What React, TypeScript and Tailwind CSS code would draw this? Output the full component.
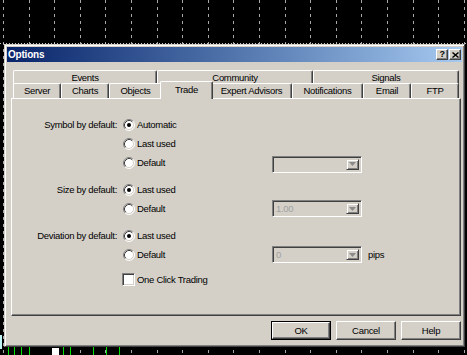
import React from "react";

const font = "font-['Liberation_Sans',Arial,sans-serif]";

const backTabs = [
  { label: "Events", w: "w-[144px]" },
  { label: "Community", w: "w-[156px]" },
  { label: "Signals", w: "w-[146px]" },
];

const frontTabs = [
  { label: "Server", w: "w-[48px]" },
  { label: "Charts", w: "w-[48px]" },
  { label: "Objects", w: "w-[53px]" },
  { label: "Trade", w: "w-[53px]", active: true },
  { label: "Expert Advisors", w: "w-[81px]" },
  { label: "Notifications", w: "w-[71px]" },
  { label: "Email", w: "w-[48px]" },
  { label: "FTP", w: "w-[48px]" },
];

function Chart() {
  const xs = Array.from({ length: 19 }, (_, i) => Math.round(3 + i * 25.6) + 0.5);
  const greens = [8, 14, 21, 29, 63, 70, 93, 106, 119];
  return (
    <svg className="absolute inset-0" width="467" height="355">
      <rect width="467" height="355" fill="#000" />
      {xs.map((x) => (
        <line key={x} x1={x} y1="0" x2={x} y2="355" stroke="#a8a8a8" strokeDasharray="3 4" />
      ))}
      <line x1="0" y1="43.5" x2="467" y2="43.5" stroke="#c8c8c8" strokeDasharray="1 2" />
      {greens.map((x) => (
        <line key={x} x1={x + 0.5} y1="347" x2={x + 0.5} y2="355" stroke="#00e000" />
      ))}
      <rect x="52" y="348" width="7" height="7" fill="#fff" />
      <rect x="0" y="335" width="2" height="14" fill="#bff4f4" />
    </svg>
  );
}

function Radio({ checked }: { checked?: boolean }) {
  return (
    <svg width="12" height="12" viewBox="0 0 12 12" className="shrink-0">
      <circle cx="6" cy="6" r="5" fill="#fff" />
      <path d="M2.11 9.89A5.5 5.5 0 0 1 9.89 2.11" fill="none" stroke="#808080" />
      <path d="M9.89 2.11A5.5 5.5 0 0 1 2.11 9.89" fill="none" stroke="#fff" />
      <path d="M2.82 9.18A4.5 4.5 0 0 1 9.18 2.82" fill="none" stroke="#404040" />
      <path d="M9.18 2.82A4.5 4.5 0 0 1 2.82 9.18" fill="none" stroke="#D4D0C8" />
      {checked && <circle cx="6" cy="6" r="2" fill="#000" />}
    </svg>
  );
}

function Combo({ value }: { value?: string }) {
  return (
    <div className="w-[90px] h-[17px] flex border border-t-[#808080] border-l-[#808080] border-r-white border-b-white shadow-[inset_1px_1px_#404040,inset_-1px_-1px_#D4D0C8] bg-[#D4D0C8] p-[2px]">
      <div className="flex-1 text-[#a0a0a0] leading-[11px] pl-[1px]">{value}</div>
      <div className="w-[13px] h-full flex items-center justify-center border border-t-[#D4D0C8] border-l-[#D4D0C8] border-r-[#404040] border-b-[#404040] shadow-[inset_1px_1px_#fff,inset_-1px_-1px_#808080]">
        <svg width="7" height="4" viewBox="0 0 7 4">
          <path d="M0 0h7L3.5 4z" fill="#8a8a8a" />
        </svg>
      </div>
    </div>
  );
}

function OptionRow({
  label,
  text,
  checked,
  combo,
  suffix,
  comboClass,
}: {
  label?: string;
  text: string;
  checked?: boolean;
  combo?: string | boolean;
  suffix?: string;
  comboClass?: string;
}) {
  return (
    <div className="flex items-center h-[19px]">
      <div className="w-[105px] text-right whitespace-nowrap">{label}</div>
      <div className="w-[149px] ml-[6px] flex items-center gap-[2px]">
        <Radio checked={checked} />
        <span>{text}</span>
      </div>
      {combo !== undefined && (
        <div className={comboClass}>
          <Combo value={typeof combo === "string" ? combo : undefined} />
        </div>
      )}
      {suffix && <span className="ml-[6px]">{suffix}</span>}
    </div>
  );
}

function Button({ label, def }: { label: string; def?: boolean }) {
  return (
    <div className={`w-[60px] h-[19px] ${def ? "border border-black" : ""}`}>
      <div className="w-full h-full flex items-center justify-center border border-t-white border-l-white border-r-[#404040] border-b-[#404040] shadow-[inset_-1px_-1px_#808080]">
        {label}
      </div>
    </div>
  );
}

export default function App() {
  return (
    <div className={`relative w-[467px] h-[355px] overflow-hidden bg-black pl-[4px] pt-[44px] text-[9.5px] leading-[12px] tracking-[-0.3px] text-black ${font}`}>
      <Chart />
      <div className="relative w-[461px] h-[303px] bg-[#D4D0C8] border border-t-[#D4D0C8] border-l-[#D4D0C8] border-r-[#404040] border-b-[#404040] shadow-[inset_1px_1px_#fff,inset_-1px_-1px_#808080] p-[2px]">
        {/* title bar */}
        <div className="h-[15px] flex items-center justify-between bg-gradient-to-r from-[#0A246A] to-[#A6CAF0] pl-[1px] pr-[1px]">
          <span className="text-white font-bold text-[10px] tracking-[-0.2px]">Options</span>
          <div className="flex gap-[1px]">
            <div className="w-[12px] h-[11px] flex items-center justify-center bg-[#D4D0C8] border border-t-white border-l-white border-r-[#404040] border-b-[#404040] shadow-[inset_-1px_-1px_#808080] font-bold text-[9px] leading-none">
              ?
            </div>
            <div className="w-[12px] h-[11px] flex items-center justify-center bg-[#D4D0C8] border border-t-white border-l-white border-r-[#404040] border-b-[#404040] shadow-[inset_-1px_-1px_#808080]">
              <svg width="7" height="6" viewBox="0 0 7 6">
                <path d="M0.5 0.5l6 5M6.5 0.5l-6 5" stroke="#000" strokeWidth="1.4" />
              </svg>
            </div>
          </div>
        </div>

        {/* tabs */}
        <div className="ml-[4px] w-[450px] mt-[8px]">
          <div className="flex ml-[2px] h-[13px]">
            {backTabs.map((t) => (
              <div
                key={t.label}
                className={`${t.w} h-[15px] flex items-start justify-center pt-[1px] bg-[#D4D0C8] border-t border-l border-r border-t-white border-l-white border-r-[#404040] shadow-[inset_-1px_0_#808080] rounded-t-[2px]`}
              >
                {t.label}
              </div>
            ))}
          </div>
          <div className="relative flex ml-[2px] h-[15px]">
            {frontTabs.map((t) =>
              t.active ? (
                <div
                  key={t.label}
                  className={`${t.w} -mx-[2px] -mt-[2px] h-[18px] relative z-10 flex items-start justify-center pt-[2px] bg-[#D4D0C8] border-t border-l border-r border-t-white border-l-white border-r-[#404040] shadow-[inset_-1px_0_#808080] rounded-t-[2px]`}
                >
                  {t.label}
                </div>
              ) : (
                <div
                  key={t.label}
                  className={`${t.w} h-[15px] flex items-center justify-center bg-[#D4D0C8] border-t border-l border-r border-t-white border-l-white border-r-[#404040] shadow-[inset_-1px_0_#808080] rounded-t-[2px]`}
                >
                  {t.label}
                </div>
              )
            )}
          </div>

          {/* panel */}
          <div className="h-[218px] border border-t-white border-l-white border-r-[#404040] border-b-[#404040] shadow-[inset_-1px_-1px_#808080] pt-[16px]">
            <OptionRow label="Symbol by default:" text="Automatic" checked />
            <OptionRow text="Last used" />
            <OptionRow text="Default" combo comboClass="mt-[3px]" />

            <div className="mt-[8px]">
              <OptionRow label="Size by default:" text="Last used" checked />
              <OptionRow text="Default" combo="1.00" />
            </div>

            <div className="mt-[8px]">
              <OptionRow label="Deviation by default:" text="Last used" checked />
              <OptionRow text="Default" combo="0" suffix="pips" />
            </div>

            <div className="mt-[6px] flex items-center h-[19px] pl-[110px] gap-[2px]">
              <div className="w-[13px] h-[13px] bg-white border border-t-[#808080] border-l-[#808080] border-r-white border-b-white shadow-[inset_1px_1px_#404040,inset_-1px_-1px_#D4D0C8]" />
              <span>One Click Trading</span>
            </div>
          </div>

          {/* buttons */}
          <div className="mt-[5px] flex justify-end gap-[5px]">
            <Button label="OK" def />
            <Button label="Cancel" />
            <Button label="Help" />
          </div>
        </div>
      </div>
    </div>
  );
}
